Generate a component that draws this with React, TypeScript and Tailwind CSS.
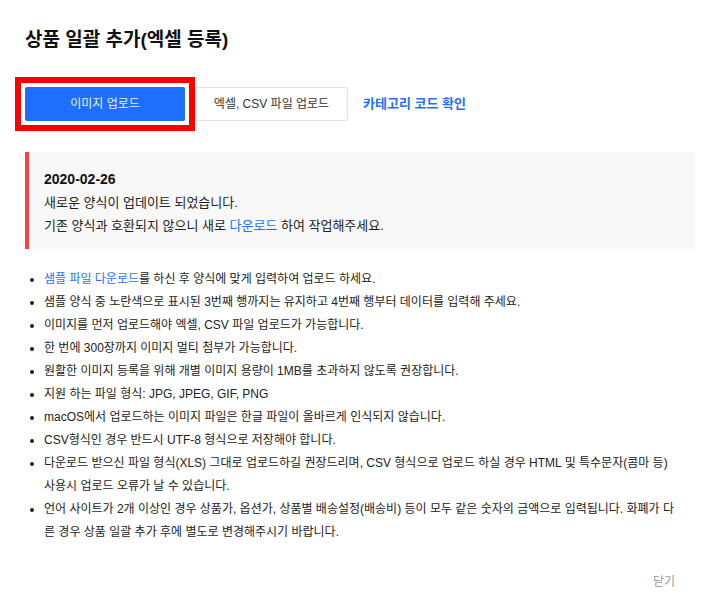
const notes: React.ReactNode[] = [
  <>
    <a className="text-[#1e6fff]">샘플 파일 다운로드</a>를 하신 후 양식에 맞게 입력하여 업로드 하세요.
  </>,
  '샘플 양식 중 노란색으로 표시된 3번째 행까지는 유지하고 4번째 행부터 데이터를 입력해 주세요.',
  '이미지를 먼저 업로드해야 엑셀, CSV 파일 업로드가 가능합니다.',
  '한 번에 300장까지 이미지 멀티 첨부가 가능합니다.',
  '원활한 이미지 등록을 위해 개별 이미지 용량이 1MB를 초과하지 않도록 권장합니다.',
  '지원 하는 파일 형식: JPG, JPEG, GIF, PNG',
  'macOS에서 업로드하는 이미지 파일은 한글 파일이 올바르게 인식되지 않습니다.',
  'CSV형식인 경우 반드시 UTF-8 형식으로 저장해야 합니다.',
  <>
    다운로드 받으신 파일 형식(XLS) 그대로 업로드하길 권장드리며, CSV 형식으로 업로드 하실 경우 HTML 및 특수문자(콤마 등)
    <br />
    사용시 업로드 오류가 날 수 있습니다.
  </>,
  <>
    언어 사이트가 2개 이상인 경우 상품가, 옵션가, 상품별 배송설정(배송비) 등이 모두 같은 숫자의 금액으로 입력됩니다. 화폐가 다
    <br />
    른 경우 상품 일괄 추가 후에 별도로 변경해주시기 바랍니다.
  </>,
];

export default function App() {
  return (
    <div
      className="flex h-[610px] w-[720px] flex-col bg-white text-[#222]"
      style={{ fontFamily: '"Liberation Sans", "Noto Sans CJK KR", sans-serif' }}
    >
      <div className="px-[25px] pt-[26px]">
        {/* 제목 */}
        <h1 className="text-[19px] font-bold leading-[27px] text-[#111]">상품 일괄 추가(엑셀 등록)</h1>

        {/* 업로드 버튼 */}
        <div className="mt-[34px] flex items-center">
          <div className="relative">
            <button className="h-[34px] w-[160px] rounded-[2px] bg-[#1e6fff] text-[12px] text-white/90">
              이미지 업로드
            </button>
            <span className="pointer-events-none absolute -inset-[10px] border-[6px] border-[#ff0000]" />
          </div>
          <button className="ml-[10px] h-[34px] w-[153px] rounded-[2px] border border-[#e2e2e2] bg-white text-[12px] text-[#333]">
            엑셀, CSV 파일 업로드
          </button>
          <a className="ml-[15px] text-[13px] font-bold text-[#1e6fff]">카테고리 코드 확인</a>
        </div>

        {/* 공지 */}
        <div className="mt-[31px] border-l-[4px] border-[#ff4040] bg-[#f8f8f8] pb-[12px] pl-[15px] pt-[16px] text-[13px] leading-[23px]">
          <p className="text-[14px] font-bold text-[#111]">2020-02-26</p>
          <p>새로운 양식이 업데이트 되었습니다.</p>
          <p>
            기존 양식과 호환되지 않으니 새로 <a className="text-[#1e6fff]">다운로드</a> 하여 작업해주세요.
          </p>
        </div>

        {/* 안내 */}
        <ul className="mt-[19px] list-disc pl-[19px] text-[12px] leading-[23px]">
          {notes.map((n, i) => (
            <li key={i}>{n}</li>
          ))}
        </ul>
      </div>

      <div className="mt-auto flex justify-end pb-[19px] pr-[45px]">
        <button className="text-[12px] leading-[18px] text-[#999]">닫기</button>
      </div>
    </div>
  );
}
